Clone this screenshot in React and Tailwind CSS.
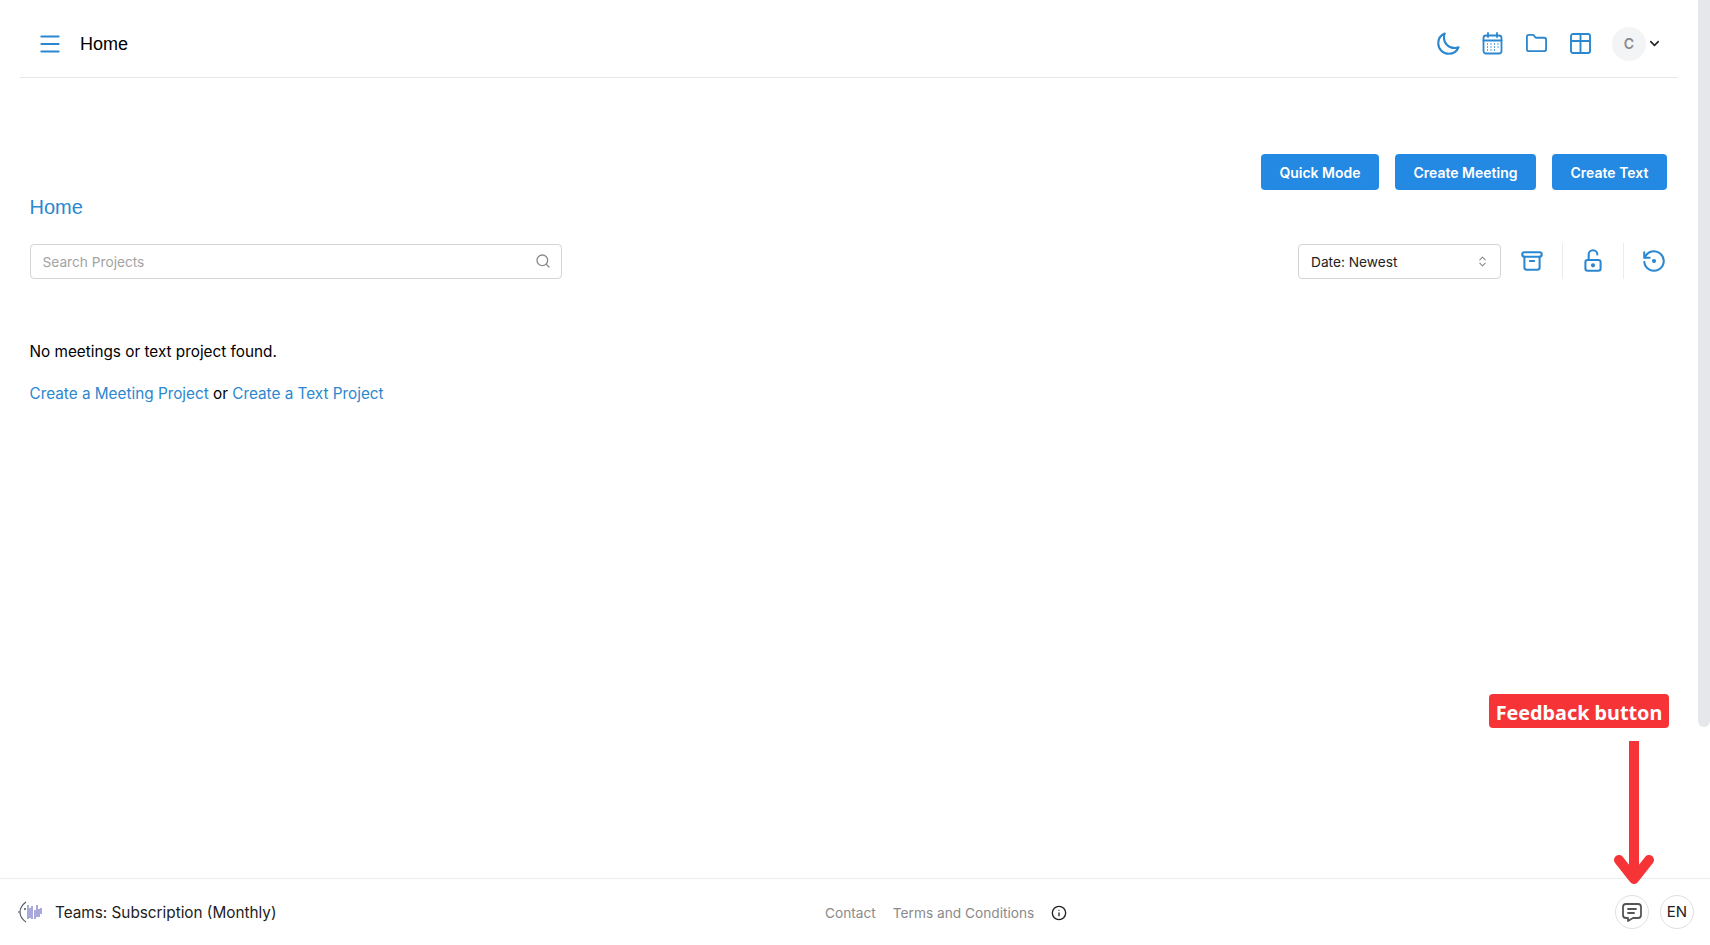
import { ChevronDown, ChevronsUpDown, Folder, Info, Menu, Search } from "lucide-react";
import { HiOutlineMoon } from "react-icons/hi2";
import { TbArchive, TbLockOpen, TbMessage, TbRestore } from "react-icons/tb";

const Logo = () => (
    <svg width="26" height="24" viewBox="0 0 26 24" fill="none">
        <path d="M9 2C5 5 3 9 3 12c0 4 3 8 6 10M3 12H1" stroke="#4b5563" strokeWidth="1.1" />
        <circle cx="8" cy="9" r="1" fill="#4b5563" />
        <path d="M11 5v14M13 8v10M15 6v13M18 10v9M20 5v12M22 9v8M24 8v6" stroke="#8583cc" strokeWidth="1.4" />
    </svg>
);

const CalendarIcon = () => (
    <svg width="21" height="23" viewBox="0 0 21 23" fill="none" stroke="#2b87cf" strokeWidth="1.8" strokeLinecap="round" strokeLinejoin="round">
        <rect x="1.5" y="3.5" width="18" height="18" rx="2.5" />
        <path d="M1.5 8.5h18M6 1v4M15 1v4" />
        <path d="M5 12h1M8.5 12h1M12 12h1M15.5 12h1M5 15h1M8.5 15h1M12 15h1M15.5 15h1M5 18h1M8.5 18h1M12 18h1" strokeWidth="1.3" strokeLinecap="butt" />
    </svg>
);

const TableIcon = () => (
    <svg width="21" height="21" viewBox="0 0 21 21" fill="none" stroke="#2b87cf" strokeWidth="1.9" strokeLinejoin="round">
        <rect x="1" y="1" width="19" height="19" rx="2" />
        <path d="M1 8h19M10.5 1v19" />
    </svg>
);

export default function App(){
    return(<>
        <div className="relative h-[945px] w-full overflow-hidden bg-white flex flex-col font-['Inter',sans-serif] text-black">
            <div className="flex flex-1 min-h-0">
                <div className="flex-1 min-w-0 flex flex-col">
                    <header className="ml-5 mr-5 h-[78px] border-b border-[#e5e7eb] flex items-center pl-5 pr-[16px] pt-[10px]">
                        <Menu size={26} strokeWidth={1.8} className="text-[#2b87cf] -ml-[3px]" />
                        <h1 className="ml-[17px] pt-[1px] text-[18px] font-['Liberation_Sans',sans-serif]">Home</h1>
                        <div className="ml-auto flex items-center text-[#2b87cf]">
                            <HiOutlineMoon size={26} strokeWidth={1.9} />
                            <div className="ml-[21px]"><CalendarIcon /></div>
                            <Folder size={23} strokeWidth={1.9} className="ml-[22px]" />
                            <div className="ml-[22px]"><TableIcon /></div>
                            <div className="ml-[21px] w-[34px] h-[34px] rounded-full bg-[#f3f4f6] flex items-center justify-center text-[14px] font-semibold text-[#8a8a8a]">C</div>
                            <ChevronDown size={15} strokeWidth={2.5} className="ml-[1px] text-[#222]" />
                        </div>
                    </header>
                    <main className="pl-[29.5px] pr-[30px] flex-1">
                        <div className="flex justify-end gap-4 mt-[76px] pr-[1px]">
                            <button className="h-9 w-[118px] rounded bg-[#2389e2] text-white text-[14px] font-semibold">Quick Mode</button>
                            <button className="h-9 w-[141px] rounded bg-[#2389e2] text-white text-[14px] font-semibold">Create Meeting</button>
                            <button className="h-9 w-[115px] rounded bg-[#2389e2] text-white text-[14px] font-semibold">Create Text</button>
                        </div>
                        <h2 className="text-[20px] leading-7 text-[#2b87cf] mt-[3px] font-['Liberation_Sans',sans-serif]">Home</h2>
                        <div className="flex items-center justify-between mt-[22px]">
                            <div className="w-[532.5px] h-[35px] border border-[#d4d4d8] rounded flex items-center pl-3 pr-[10px]">
                                <span className="pt-[2px] text-[13.7px] text-[#a3a3a3]">Search Projects</span>
                                <Search size={16} className="ml-auto text-[#8a8a8a]" />
                            </div>
                            <div className="flex items-center">
                                <div className="w-[203px] h-[35px] border border-[#d4d4d8] rounded flex items-center justify-between pl-3 pr-[11px] text-[13.7px] text-[#222]">
                                    <span className="pt-[2px]">Date: Newest</span>
                                    <ChevronsUpDown size={13} className="text-[#8a8a8a]" />
                                </div>
                                <TbArchive size={26} strokeWidth={1.9} className="ml-[18px] text-[#2b87cf]" />
                                <div className="ml-[17px] h-9 border-l border-[#ececec]"></div>
                                <TbLockOpen size={26} strokeWidth={1.9} className="ml-[17px] text-[#2b87cf]" />
                                <div className="ml-[17px] h-9 border-l border-[#ececec]"></div>
                                <TbRestore size={26} strokeWidth={1.9} className="ml-[17px] mr-[1px] text-[#2b87cf]" />
                            </div>
                        </div>
                        <p className="mt-[61px] text-[15.3px] leading-6">No meetings or text project found.</p>
                        <p className="mt-[18px] text-[15.3px] leading-6"><a className="text-[#2b87cf]">Create a Meeting Project</a> or <a className="text-[#2b87cf]">Create a Text Project</a></p>
                    </main>
                </div>
                <div className="w-3 shrink-0 self-start h-[727px] bg-[#e5e7eb] rounded-b-md"></div>
            </div>
            <footer className="h-[67px] border-t border-[#ececec] flex items-center relative pl-[17px] pr-[16px]">
                <Logo />
                <span className="ml-[12px] pt-[3px] text-[15.3px] text-[#222]">Teams: Subscription (Monthly)</span>
                <div className="absolute left-[825px] flex items-center pt-[3px] text-[13.7px] text-[#8a8a8a]">
                    <span>Contact</span>
                    <span className="ml-[17px]">Terms and Conditions</span>
                    <Info size={16} className="ml-[17px] text-[#222]" />
                </div>
                <div className="ml-auto flex items-center gap-[11px]">
                    <div className="w-[34px] h-[34px] rounded-full border border-[#e0e0e0] flex items-center justify-center">
                        <TbMessage size={24} strokeWidth={1.8} className="text-[#555]" />
                    </div>
                    <div className="w-[34px] h-[34px] rounded-full border border-[#e0e0e0] flex items-center justify-center text-[15px] text-[#222]">EN</div>
                </div>
            </footer>
            {/* annotation over the page */}
            <div className="absolute left-[1489px] top-[694px] w-[180px] h-[34px] pt-[3px] rounded bg-[#f63437] text-white text-[19.8px] font-bold font-['Noto_Sans',sans-serif] flex items-center justify-center">Feedback button</div>
            <svg className="absolute left-[1610px] top-[738px]" width="48" height="148" viewBox="0 0 48 148" fill="none" stroke="#f63437" strokeWidth="10" strokeLinecap="round" strokeLinejoin="round">
                <path d="M24 3V140" strokeLinecap="butt" />
                <path d="M9 122L24 141L39 122" />
            </svg>
        </div>
    </>)
}
